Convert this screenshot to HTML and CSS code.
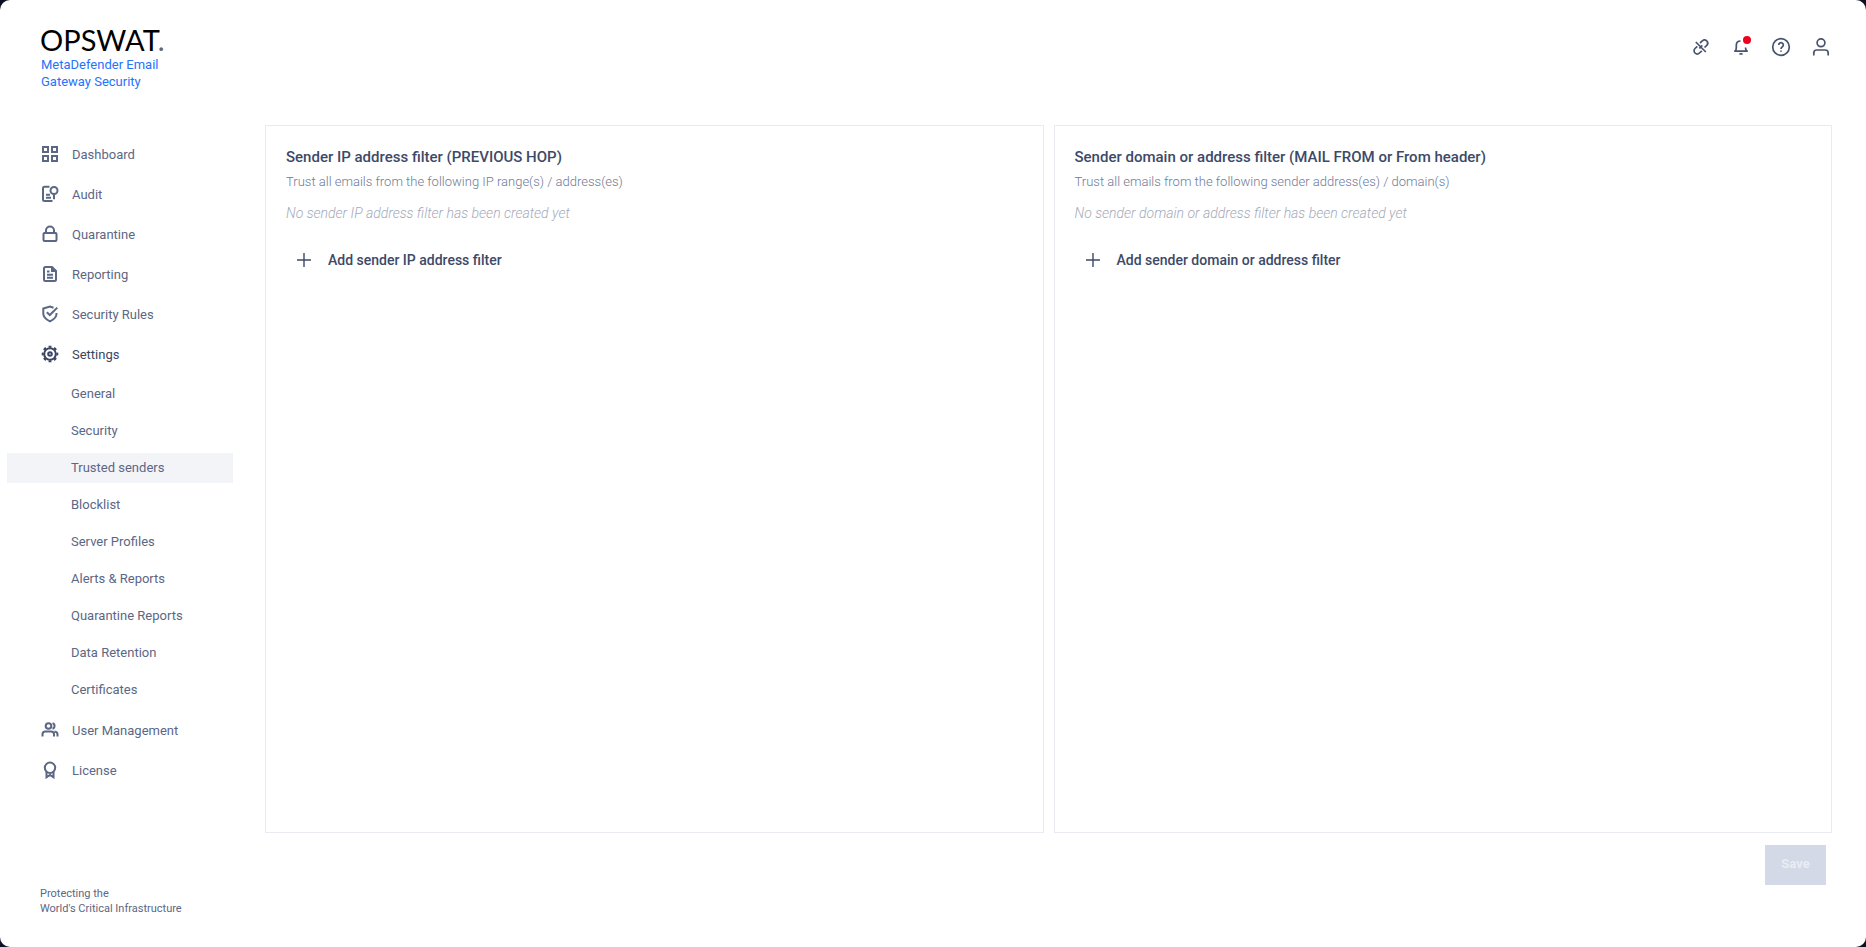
FILE: index.html
```html
<!DOCTYPE html>
<html lang="en">
<head>
<meta charset="utf-8">
<title>Trusted senders - MetaDefender Email Gateway Security</title>
<link rel="stylesheet" href="styles.css">
</head>
<body>
<div class="app">
  <aside class="sidebar">
    <div class="brand">
      <div class="brand-logo">OPSWAT<span class="brand-dot">.</span></div>
      <div class="brand-product">MetaDefender Email<br>Gateway Security</div>
    </div>
    <nav class="nav">
      <a class="nav-item" href="#"><svg class="icon" viewBox="0 0 18 18"><path d="M2 2h5v5H2zM11 2h5v5h-5zM2 11h5v5H2zM11 11h5v5h-5z"/></svg>Dashboard</a>
      <a class="nav-item" href="#"><svg class="icon" viewBox="0 0 18 18"><path d="M8.500 1.800H3.500Q2 1.800 2 3.300v11.200q0 1.500 1.500 1.500h8M5 9.800h4M5 12.800h5"/><circle cx="13" cy="5.500" r="3.500"/><path d="M13 9.200v5"/></svg>Audit</a>
      <a class="nav-item" href="#"><svg class="icon" viewBox="0 0 18 18"><rect x="2.500" y="8" width="13" height="8" rx="1"/><path d="M5 8V5.500a4 4 0 0 1 8 0V8"/></svg>Quarantine</a>
      <a class="nav-item" href="#"><svg class="icon" viewBox="0 0 18 18"><path d="M11 2H4.500Q3 2 3 3.500v11Q3 16 4.500 16h9q1.500 0 1.500-1.500V6zM11 2v4h4M6 6.500h2.500M6 9.800h6M6 12.800h6"/></svg>Reporting</a>
      <a class="nav-item" href="#"><svg class="icon" viewBox="0 0 18 18"><path d="M12.500 2.800L9 1.500 2.300 3.600v5.200c0 3.800 3.700 6.200 6.700 7.600 3-1.400 6.500-3.800 6.500-7.600V8"/><path d="M5.800 7.200l3 2.800 7.500-7.400"/></svg>Security Rules</a>
      <a class="nav-item nav-item-open" href="#"><svg class="icon" viewBox="0 0 18 18"><circle cx="9" cy="9" r="5.800"/><circle class="gear-teeth" cx="9" cy="9" r="7.300" pathLength="16"/><circle cx="9" cy="9" r="1.800"/></svg>Settings</a>
      <div class="subnav">
        <a class="subnav-item" href="#">General</a>
        <a class="subnav-item" href="#">Security</a>
        <a class="subnav-item subnav-item-active" href="#" aria-current="page">Trusted senders</a>
        <a class="subnav-item" href="#">Blocklist</a>
        <a class="subnav-item" href="#">Server Profiles</a>
        <a class="subnav-item" href="#">Alerts &amp; Reports</a>
        <a class="subnav-item" href="#">Quarantine Reports</a>
        <a class="subnav-item" href="#">Data Retention</a>
        <a class="subnav-item" href="#">Certificates</a>
      </div>
      <a class="nav-item" href="#"><svg class="icon" viewBox="0 0 18 18"><circle cx="7.500" cy="5" r="2.800"/><path d="M1.500 15.500v-2.200Q1.500 10.500 4.300 10.500h5.900q2.800 0 2.800 2.800v2.200M11.500 2.300a2.800 2.800 0 0 1 0 5.400M13.500 10.500q3 .3 3 2.800v2.200"/></svg>User Management</a>
      <a class="nav-item" href="#"><svg class="icon" viewBox="0 0 18 18"><circle cx="9" cy="6.800" r="5.200"/><path d="M5.500 11v5.300L9 14l3.500 2.300V11"/></svg>License</a>
    </nav>
    <footer class="tagline">Protecting the<br>World's Critical Infrastructure</footer>
  </aside>
  <div class="content">
    <header class="toolbar">
      <button class="tool" type="button" aria-label="Connection"><svg class="tool-icon" viewBox="0 0 20 20"><path d="M9 6l2.300-2a3 3 0 0 1 4.500 4.300l-2.300 2.200M10.800 13.800l-2.300 2.200a3 3 0 0 1-4.500-4.500l2.300-2.200M4.800 5l10 10M11.300 8.300l-3 3"/></svg></button>
      <button class="tool" type="button" aria-label="Notifications"><svg class="tool-icon" viewBox="0 0 20 20"><path d="M9.500 4Q5.300 4 5.300 8.300V11q0 2-1.300 3.200M14.500 10.500q0 2.500 1.300 3.700M3.200 14.200h13.600M8.500 16.500q1.500 1 3 0"/></svg><span class="alert-dot"></span></button>
      <button class="tool" type="button" aria-label="Help"><svg class="tool-icon" viewBox="0 0 20 20"><circle cx="10" cy="10" r="8.300"/><path d="M7.700 8a2.300 2.300 0 1 1 3.500 2q-1.200.7-1.200 1.900M10 13.500v1.300"/></svg></button>
      <button class="tool" type="button" aria-label="Account"><svg class="tool-icon" viewBox="0 0 20 20"><circle cx="10" cy="5.800" r="3.900"/><path d="M2.800 18.500v-2.500q0-3 3-3h8.400q3 0 3 3v2.500"/></svg></button>
    </header>
    <main class="panels">
      <section class="panel">
        <h2 class="panel-title">Sender IP address filter (PREVIOUS HOP)</h2>
        <p class="panel-text">Trust all emails from the following IP range(s) / address(es)</p>
        <p class="panel-empty">No sender IP address filter has been created yet</p>
        <button class="add" type="button"><svg class="add-icon" viewBox="0 0 14 14"><path d="M7 0v14M0 7h14"/></svg>Add sender IP address filter</button>
      </section>
      <section class="panel">
        <h2 class="panel-title">Sender domain or address filter (MAIL FROM or From header)</h2>
        <p class="panel-text">Trust all emails from the following sender address(es) / domain(s)</p>
        <p class="panel-empty">No sender domain or address filter has been created yet</p>
        <button class="add" type="button"><svg class="add-icon" viewBox="0 0 14 14"><path d="M7 0v14M0 7h14"/></svg>Add sender domain or address filter</button>
      </section>
    </main>
    <div class="actions"><button class="save" type="button" disabled>Save</button></div>
  </div>
</div>
</body>
</html>
```
FILE: styles.css
```css
* { box-sizing: border-box; }
body { margin: 0; background: #0b1024; font-family: Roboto, "Liberation Sans", sans-serif; font-size: 13px; color: #5b6785; }
button { padding: 0; border: 0; background: none; font: inherit; color: inherit; }
a { color: inherit; text-decoration: none; }
svg { display: block; flex: none; fill: none; stroke: currentColor; }

.app { display: flex; min-height: 100vh; background: #fff; border-radius: 10px; }

.sidebar { display: flex; flex-direction: column; flex: none; width: 265px; }
.brand { height: 134px; padding: 24px 0 0 40px; }
.brand-logo { padding-left: 0; font: 400 29px/32px Lato, sans-serif; color: #000; }
.brand-dot { color: #666; }
.brand-product { padding-left: 1px; font-size: 13px; line-height: 17px; color: #2672fb; }
.nav { display: flex; flex-direction: column; }
.nav-item { display: flex; align-items: center; gap: 13px; height: 40px; padding-left: 41px; }
.nav-item-open { color: #3a4565; }
.icon { width: 18px; height: 18px; stroke-width: 2; }
.gear-teeth { stroke-dasharray: 1; stroke-dashoffset: 0.5; }
.subnav { display: flex; flex-direction: column; gap: 7px; padding: 5px 32px 5px 7px; }
.subnav-item { height: 30px; line-height: 30px; padding-left: 64px; }
.subnav-item-active { background: #f3f4f8; }
.tagline { margin-top: auto; padding: 0 0 31px 40px; font-size: 11px; line-height: 15px; }

.content { display: flex; flex-direction: column; flex: 1; padding-right: 34px; }
.toolbar { display: flex; justify-content: flex-end; gap: 20px; height: 125px; padding: 37px 1px 0 0; }
.tool { position: relative; width: 20px; height: 20px; color: #47536f; }
.tool-icon { width: 20px; height: 20px; stroke-width: 1.7; }
.alert-dot { position: absolute; top: -1px; right: 0; width: 8px; height: 8px; border-radius: 50%; background: #ee0220; }

.panels { display: grid; grid-template-columns: 1fr 1fr; gap: 10px; flex: 1; }
.panel { padding: 20px; border: 1px solid #e9eaf3; }
.panel-title { margin: 0; font-size: 15px; line-height: 22px; font-weight: 500; color: #3d4968; }
.panel-text { margin: 3px 0 0; line-height: 22px; font-weight: 300; color: #707a96; }
.panel-empty { margin: 9px 0 0; font-size: 14px; line-height: 22px; font-weight: 300; font-style: italic; color: #a4aaba; }
.add { display: flex; align-items: center; gap: 17px; height: 40px; margin-top: 16px; padding-left: 11px; font-size: 14px; font-weight: 500; color: #3d4968; }
.add-icon { width: 14px; height: 14px; stroke-width: 1.4; }

.actions { display: flex; justify-content: flex-end; padding: 12px 6px 62px 0; }
.save { width: 61px; height: 40px; padding-bottom: 3px; background: #d3d9e7; font-size: 13px; font-weight: 700; color: #e9ecf4; }
```
